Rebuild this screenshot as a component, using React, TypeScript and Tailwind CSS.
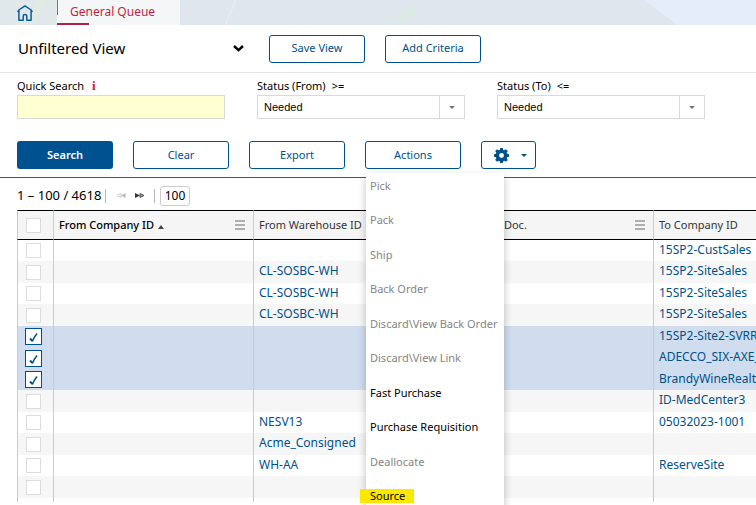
import { useState } from 'react'

const menuItems = [
  { label: 'Pick', enabled: false },
  { label: 'Pack', enabled: false },
  { label: 'Ship', enabled: false },
  { label: 'Back Order', enabled: false },
  { label: 'Discard\\View Back Order', enabled: false },
  { label: 'Discard\\View Link', enabled: false },
  { label: 'Fast Purchase', enabled: true },
  { label: 'Purchase Requisition', enabled: true },
  { label: 'Deallocate', enabled: false },
  { label: 'Source', enabled: true, marked: true },
]

const initialRows = [
  { id: 1, warehouse: '', company: '15SP2-CustSales', checked: false },
  { id: 2, warehouse: 'CL-SOSBC-WH', company: '15SP2-SiteSales', checked: false },
  { id: 3, warehouse: 'CL-SOSBC-WH', company: '15SP2-SiteSales', checked: false },
  { id: 4, warehouse: 'CL-SOSBC-WH', company: '15SP2-SiteSales', checked: false },
  { id: 5, warehouse: '', company: '15SP2-Site2-SVRR', checked: true },
  { id: 6, warehouse: '', company: 'ADECCO_SIX-AXE_', checked: true },
  { id: 7, warehouse: '', company: 'BrandyWineRealto', checked: true },
  { id: 8, warehouse: '', company: 'ID-MedCenter3', checked: false },
  { id: 9, warehouse: 'NESV13', company: '05032023-1001', checked: false },
  { id: 10, warehouse: 'Acme_Consigned', company: '', checked: false },
  { id: 11, warehouse: 'WH-AA', company: 'ReserveSite', checked: false },
  { id: 12, warehouse: '', company: '', checked: false },
]

const outlineButton =
  'h-7 w-24 shrink-0 rounded-[3px] border border-[#00518a] bg-white text-[11px] text-[#00518a]'

const HomeIcon = () => (
  <svg width="16" height="16" viewBox="0 0 16 16" fill="none" stroke="#0b5c9e" strokeWidth="1.5" strokeLinejoin="round">
    <path d="M.6 7.200 1.900 5 8 .9 14.100 5l1.300 2.200M1.900 5v10.200h4.300v-4.200q0-1.400 1.800-1.400t1.800 1.400v4.200h4.300V5" />
  </svg>
)

const GearIcon = () => (
  <svg width="15" height="15" viewBox="0 0 16 16" fill="#00518a">
    <path
      fillRule="evenodd"
      d="M6.600 0h2.800l.4 2 1.200.5L12.700 1.300l2 2-1.200 1.700.5 1.200 2 .4v2.800l-2 .4-.5 1.200 1.200 1.700-2 2-1.700-1.200-1.200.5-.4 2H6.600l-.4-2-1.200-.5-1.700 1.200-2-2 1.200-1.700-.5-1.200-2-.4V6.600l2-.4.5-1.200-1.200-1.700 2-2 1.700 1.200 1.200-.5zM8 5.400a2.600 2.600 0 1 0 0 5.200 2.600 2.600 0 0 0 0-5.200z"
    />
  </svg>
)

const ColumnMenu = () => (
  <button type="button" aria-label="Column menu" className="flex shrink-0 flex-col gap-[2px]">
    <span className="h-[2px] w-[10px] bg-[#b0b0b0]" />
    <span className="h-[2px] w-[10px] bg-[#b0b0b0]" />
    <span className="h-[2px] w-[10px] bg-[#b0b0b0]" />
  </button>
)

const TickBox = ({ label, checked, onChange }: { label: string; checked: boolean; onChange: () => void }) => (
  <label className="flex items-center justify-center pr-1">
    <span className="relative flex items-center justify-center">
      <input
        type="checkbox"
        aria-label={label}
        checked={checked}
        onChange={onChange}
        className="size-[15px] appearance-none border border-[#dcdcdc] bg-white checked:size-[17px] checked:border-[#00518a]"
      />
      {checked && (
        <svg className="pointer-events-none absolute" width="17" height="17" viewBox="0 0 17 17" fill="none" stroke="#00518a">
          <path d="M5 10.500 7.500 13" strokeWidth="2" />
          <path d="M7.300 13.500C8.500 10.500 10 8 12 5.500" strokeWidth="1.500" />
        </svg>
      )}
    </span>
  </label>
)

const StatusSelect = ({ id, label, operator }: { id: string; label: string; operator: string }) => (
  <div className="w-52 shrink-0">
    <label htmlFor={id} className="flex h-4 items-center gap-[6px] text-[11px]">
      {label} <span>{operator}</span>
    </label>
    <div className="relative mt-[1px]">
      <select
        id={id}
        className="block h-6 w-full appearance-none border border-[#d9d9d9] bg-white pl-[6px] font-['Liberation_Sans',sans-serif] text-[11px] text-black"
      >
        <option>Needed</option>
      </select>
      <span className="pointer-events-none absolute inset-y-0 right-0 flex w-[26px] items-center justify-center border border-[#d9d9d9]">
        <svg width="6" height="3" viewBox="0 0 6 3" fill="#757575">
          <path d="M0 0h6L3 3z" />
        </svg>
      </span>
    </div>
  </div>
)

const TopBar = () => (
  <header className="relative flex h-[25px] bg-[#dfe6ee]">
    <svg className="absolute inset-0 h-full w-full" aria-hidden="true">
      <path d="M0 0h57v25H0z" fill="#e0e8ec" />
      <path d="M12 25 30 12 38 0h10l-6 10-8 15z" fill="#e2ebe3" />
      <path d="M225 25 236 0" stroke="#eee8f3" strokeWidth="1.500" />
      <path d="M398 25v-9l6-8 2-3h10v10h-8l-3 10z" fill="#dceae6" />
      <path d="M644 0h1000v25H678z" fill="#e5eef8" />
    </svg>
    <a href="#home" aria-label="Home" className="relative flex w-[57px] items-center pl-[17px]">
      <HomeIcon />
    </a>
    <a href="#general-queue" className="relative flex w-[123px] flex-col justify-between bg-[#f5f6f7] text-[12px] leading-[23px] text-[#c01f3e]">
      <span className="pl-[13px]">General Queue</span>
      <span className="h-[2px] w-8 bg-[#b0223f]" />
      <span className="absolute left-0 top-0 h-[15px] w-[1px] bg-[#777]" />
    </a>
  </header>
)

const App = () => {
  const [rows, setRows] = useState(initialRows)
  const [menuOpen, setMenuOpen] = useState(true)

  const toggleRow = (id: number) => {
    setRows(rows.map((row) => (row.id === id ? { ...row, checked: !row.checked } : row)))
  }

  const allChecked = rows.every((row) => row.checked)
  const toggleAll = () => setRows(rows.map((row) => ({ ...row, checked: !allChecked })))

  return (
    <main className="h-screen overflow-hidden bg-white font-['Noto_Sans',sans-serif] text-black">
      <TopBar />

      <section className="flex h-12 items-center gap-5 border-b border-[#e3e3e3] pl-[18px]">
        <button type="button" className="flex w-[231px] items-center justify-between pr-[5px] text-[15px]">
          Unfiltered View
          <svg width="11" height="7" viewBox="0 0 11 7" fill="none" stroke="#000" strokeWidth="2.400">
            <path d="m1 1 4.500 4.200L10 1" />
          </svg>
        </button>
        <button type="button" className={outlineButton}>Save View</button>
        <button type="button" className={outlineButton}>Add Criteria</button>
      </section>

      <section className="flex gap-8 pl-[17px] pt-[5px]">
        <div className="w-52 shrink-0">
          <label htmlFor="quick-search" className="flex h-4 items-center gap-2 text-[11px]">
            Quick Search <span className="font-['Liberation_Serif',serif] text-[13px] font-bold text-[#e0103a]">i</span>
          </label>
          <input id="quick-search" type="text" className="mt-[1px] block h-6 w-full border border-[#d9d9d9] bg-[#ffffd2] px-2 text-[11px]" />
        </div>
        <StatusSelect id="status-from" label="Status (From)" operator=">=" />
        <StatusSelect id="status-to" label="Status (To)" operator="<=" />
      </section>

      <section className="flex gap-5 pb-2 pl-[17px] pt-[22px]">
        <button type="button" className="h-7 w-24 shrink-0 rounded-[3px] bg-[#00518f] text-[11px] font-semibold text-white">
          Search
        </button>
        <button type="button" className={outlineButton}>Clear</button>
        <button type="button" className={outlineButton}>Export</button>
        <div className="relative">
          <button type="button" aria-expanded={menuOpen} onClick={() => setMenuOpen(!menuOpen)} className={outlineButton}>
            Actions
          </button>
          {menuOpen && (
            <ul className="absolute left-[1px] top-8 z-10 w-[138px] bg-white text-[11px] shadow-[0_4px_8px_rgba(0,0,0,0.25)]">
              {menuItems.map((item) => (
                <li key={item.label} className="h-[34px] even:h-[35px] last:h-[22px]">
                  <button
                    type="button"
                    disabled={!item.enabled}
                    className={
                      item.marked
                        ? 'mt-[6px] -ml-[6px] block h-[14px] w-[54px] bg-[#fbe800] pl-[10px] text-left leading-[12px]'
                        : 'flex h-[26px] w-full items-center whitespace-nowrap pl-1 disabled:text-[#858585]'
                    }
                  >
                    {item.label}
                  </button>
                </li>
              ))}
            </ul>
          )}
        </div>
        <button type="button" aria-label="Settings" className="flex h-7 w-[55px] shrink-0 items-center justify-center gap-3 rounded-[3px] border border-[#00518a] pl-[3px]">
          <GearIcon />
          <svg width="6" height="3" viewBox="0 0 6 3" fill="#00518a">
            <path d="M0 0h6L3 3z" />
          </svg>
        </button>
      </section>
      <div className="h-px bg-[#a8274a]" />

      <section className="flex h-8 items-center pl-[17px] pt-[3px] text-[13px]">
        <span className="w-[88px] whitespace-nowrap">1 – 100 / 4618</span>
        <div className="flex h-[14px] items-center gap-[9px] border-x border-[#b5b5b5] pl-[10px] pr-[9px]">
          <button type="button" aria-label="Previous page" disabled>
            <svg className="block" width="10" height="5" viewBox="0 0 10 5">
              <path d="M5 .5 1 2.500l4 2z" fill="none" stroke="#ccc" />
              <path d="M9.500 0v5L5 2.500z" fill="#bbb" />
            </svg>
          </button>
          <button type="button" aria-label="Next page">
            <svg className="block" width="10" height="5" viewBox="0 0 10 5">
              <path d="M0 0v5l5-2.500z" fill="#333" />
              <path d="m5 .5 4 2-4 2z" fill="#999" stroke="#555" />
            </svg>
          </button>
        </div>
        <input aria-label="Rows per page" defaultValue="100" className="ml-[5px] h-5 w-[30px] rounded-[3px] border border-[#ccc] text-center text-[12px]" />
      </section>

      <div className="overflow-hidden pl-[17px]">
        <table className="w-[837px] table-fixed border-separate border-spacing-0 text-left text-[11px]">
          <colgroup>
            <col className="w-[37px]" />
            <col className="w-[200px]" />
            <col className="w-[200px]" />
            <col className="w-[200px]" />
            <col className="w-[200px]" />
          </colgroup>
          <thead>
            <tr className="h-[30px] bg-[#f5f5f5] text-[#333] *:border-y *:border-r *:border-y-black *:border-r-[#c9cdd2] *:p-0 *:font-normal">
              <th className="border-l border-l-[#c9c9c9]">
                <TickBox label="Select all" checked={allChecked} onChange={toggleAll} />
              </th>
              <th>
                <div className="flex items-center justify-between pl-[5px] pr-2 text-black">
                  <span className="flex items-center gap-1 font-medium">
                    From Company ID
                    <svg className="mt-1" width="6" height="4" viewBox="0 0 6 4" fill="#444">
                      <path d="M0 4h6L3 0z" />
                    </svg>
                  </span>
                  <ColumnMenu />
                </div>
              </th>
              <th className="pl-[5px]!">From Warehouse ID</th>
              <th>
                <div className="flex items-center justify-between pl-[5px] pr-2">
                  Request Doc.
                  <ColumnMenu />
                </div>
              </th>
              <th className="pl-[5px]!">To Company ID</th>
            </tr>
          </thead>
          <tbody className="text-[12px] text-[#00518a]">
            {rows.map((row) => (
              <tr
                key={row.id}
                className={`h-[21px] leading-[20px] even:h-[22px] *:border-r *:border-[#cccccc] *:p-0 ${row.checked ? 'bg-[#cfddee]' : 'even:bg-[#f6f6f6]'}`}
              >
                <td className="border-l">
                  <TickBox label={`Select row ${row.id}`} checked={row.checked} onChange={() => toggleRow(row.id)} />
                </td>
                <td />
                <td className="pl-[5px]! align-top">
                  <a href="#warehouse">{row.warehouse}</a>
                </td>
                <td />
                <td className="pl-[5px]! align-top">
                  <a href="#company">{row.company}</a>
                </td>
              </tr>
            ))}
            <tr className="h-1 *:border-r *:border-[#cccccc] *:p-0">
              <td className="border-l" />
              <td />
              <td />
              <td />
              <td />
            </tr>
          </tbody>
        </table>
      </div>
    </main>
  )
}

export default App
